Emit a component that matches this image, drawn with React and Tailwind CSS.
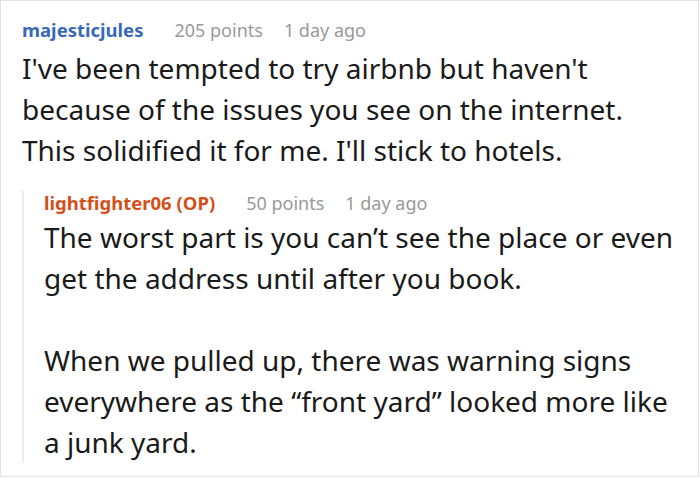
function Meta({ name, nameClass, points }) {
  return (
    <div className="flex items-baseline leading-[24px]">
      <span className={`text-[18.5px] font-bold ${nameClass}`}>{name}</span>
      <span className="ml-[31px] text-[18px] text-[#999]">{points} points</span>
      <span className="ml-[21px] text-[18px] text-[#999]">1 day ago</span>
    </div>
  )
}

export default function App() {
  return (
    <div className="w-[700px] h-[478px] bg-white overflow-hidden font-['Noto_Sans',sans-serif]">
      <div className="w-[699px] h-[477px] border border-[#e2e2e2] pl-[21px] pr-[22px] pt-[17px]">
        <Meta name="majesticjules" nameClass="text-[#3868b8]" points="205" />
        <p className="mt-[6px] text-[28px] leading-[41px] text-[#1a1a1a]">
          I've been tempted to try airbnb but haven't because of the issues you see on the internet. This solidified it for me. I'll stick to hotels.
        </p>

        <div className="mt-[28px] border-l-2 border-[#ececec] pl-[20px]">
          <div className="-mt-[8px]">
            <Meta name="lightfighter06 (OP)" nameClass="text-[#d4501a]" points="50" />
          </div>
          <div className="mt-[2px] text-[28px] leading-[41px] text-[#1a1a1a]">
            <p>The worst part is you can’t see the place or even get the address until after you book.</p>
            <p className="mt-[41px]">When we pulled up, there was warning signs everywhere as the “front yard” looked more like a junk yard.</p>
          </div>
        </div>
      </div>
    </div>
  )
}
